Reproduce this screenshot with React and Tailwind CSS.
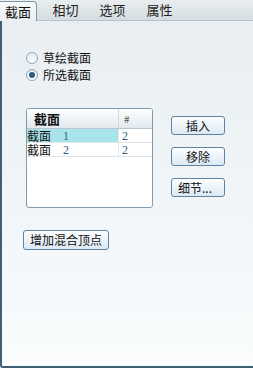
import React, { useState } from "react";

const font = { fontFamily: '"Noto Sans CJK SC", "Noto Sans", sans-serif' };
const serif = { fontFamily: '"Liberation Serif", serif' };

const Btn = ({ children, className = "" }) => (
  <button
    className={`h-[19px] rounded-[3px] border border-[#5f84a3] bg-gradient-to-b from-[#fdfeff] to-[#dbe9f4] text-[12px] leading-none text-[#111] ${className}`}
  >
    {children}
  </button>
);

export default function App() {
  const [mode, setMode] = useState("selected");
  const tabs = ["截面", "相切", "选项", "属性"];
  const rows = [
    { name: "截面", n: 1, c: 2, active: true },
    { name: "截面", n: 2, c: 2 },
  ];

  return (
    <div className="w-[253px] h-[368px] flex flex-col bg-[#f4f7f9] overflow-hidden" style={font}>
      {/* tabs */}
      <div className="h-[21px] flex items-end bg-gradient-to-b from-[#e9eef0] to-[#d5dde0] border-b border-[#b3c4cf]">
        {tabs.map((t, i) =>
          i === 0 ? (
            <div
              key={t}
              className="w-[37px] h-[20px] -mb-px mr-[5px] flex items-center justify-center bg-gradient-to-b from-[#f6f9fa] to-[#eaf0f3] border border-l-0 border-b-0 border-[#7f97a8] rounded-tr-[4px] text-[13px] text-[#111]"
            >
              {t}
            </div>
          ) : (
            <div key={t} className="w-[47px] h-[20px] flex items-center justify-center text-[13px] text-[#222]">
              {t}
            </div>
          )
        )}
      </div>

      {/* panel */}
      <div className="flex-1 border-l-2 border-b-2 border-[#3f6079] rounded-bl-[3px] bg-gradient-to-b from-[#e8eef2] to-[#fafcfd] pt-[30px] pr-[3px]">
        <div className="flex flex-col gap-[3px] pl-[24px]">
          {[
            ["sketch", "草绘截面"],
            ["selected", "所选截面"],
          ].map(([k, label]) => (
            <label key={k} className="flex items-center gap-[5px] h-[14px] text-[12px] text-[#111] cursor-pointer" onClick={() => setMode(k)}>
              <span className="w-[12px] h-[12px] rounded-full border border-[#8ea6b8] bg-gradient-to-b from-[#e4ebf0] to-[#ffffff] flex items-center justify-center">
                {mode === k && <span className="w-[6px] h-[6px] rounded-full bg-[#2e5d80]" />}
              </span>
              {label}
            </label>
          ))}
        </div>

        <div className="flex mt-[26px] pl-[24px]">
          <div className="w-[127px] h-[100px] rounded-[3px] border border-[#7d9cb2] bg-white overflow-hidden">
            <div className="flex h-[20px] bg-gradient-to-b from-[#ffffff] to-[#e2e9ee] border-b border-[#b8c6d0]">
              <div className="w-[92px] pl-[7px] flex items-center text-[13px] font-bold text-[#111] border-r border-[#d0d9df]">截面</div>
              <div className="flex-1 flex items-center pl-[5px] text-[10px] text-[#555]">#</div>
            </div>
            {rows.map((r) => (
              <div key={r.n} className="flex h-[14px] border-b border-[#dfe6ea] leading-[14px]">
                <div className={`w-[92px] flex items-center border-r border-[#dfe6ea] ${r.active ? "bg-[#a8e4ea]" : ""}`}>
                  <span className="text-[12px] text-[#111]">{r.name}</span>
                  <span className="ml-[12px] text-[12px] text-[#3c5a73]" style={serif}>{r.n}</span>
                </div>
                <div className="flex-1 pl-[3px] flex items-center text-[12px] text-[#3c5a73]" style={serif}>
                  {r.c}
                </div>
              </div>
            ))}
          </div>

          <div className="flex flex-col ml-[18px] mt-[8px] gap-[12px]">
            <Btn className="w-[54px]">插入</Btn>
            <Btn className="w-[54px]">移除</Btn>
            <Btn className="w-[54px] text-left pl-[6px]">细节...</Btn>
          </div>
        </div>

        <div className="flex pl-[21px] mt-[22px]">
          <Btn className="w-[86px] h-[20px] text-[12px]">增加混合顶点</Btn>
        </div>
      </div>
    </div>
  );
}
